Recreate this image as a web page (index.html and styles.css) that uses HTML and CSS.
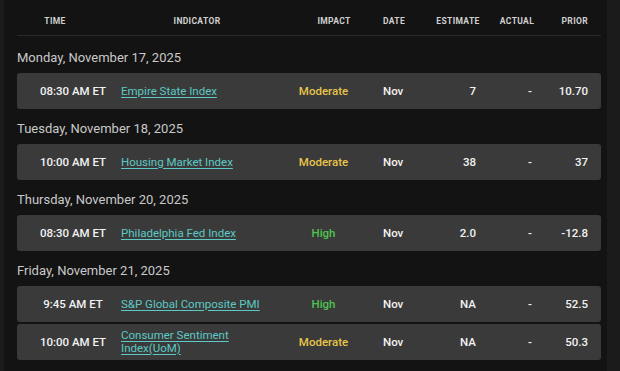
FILE: index.html
```html
<!DOCTYPE html>
<html lang="en">
<head>
<meta charset="utf-8">
<title>Economic Calendar</title>
<link rel="stylesheet" href="styles.css">
</head>
<body>
<div class="panel">
  <div class="thead">
    <div class="th th-time">Time</div>
    <div class="th th-ind">Indicator</div>
    <div class="th th-impact">Impact</div>
    <div class="th th-date">Date</div>
    <div class="th th-est">Estimate</div>
    <div class="th th-act">Actual</div>
    <div class="th th-prior">Prior</div>
  </div>

  <section class="day">
    <h2 class="day-title">Monday, November 17, 2025</h2>
    <div class="row">
      <div class="c-time">08:30 AM ET</div>
      <div class="c-ind"><a href="#">Empire State Index</a></div>
      <div class="c-impact moderate">Moderate</div>
      <div class="c-date">Nov</div>
      <div class="c-est">7</div>
      <div class="c-act">-</div>
      <div class="c-prior">10.70</div>
    </div>
  </section>

  <section class="day">
    <h2 class="day-title">Tuesday, November 18, 2025</h2>
    <div class="row">
      <div class="c-time">10:00 AM ET</div>
      <div class="c-ind"><a href="#">Housing Market Index</a></div>
      <div class="c-impact moderate">Moderate</div>
      <div class="c-date">Nov</div>
      <div class="c-est">38</div>
      <div class="c-act">-</div>
      <div class="c-prior">37</div>
    </div>
  </section>

  <section class="day">
    <h2 class="day-title">Thursday, November 20, 2025</h2>
    <div class="row">
      <div class="c-time">08:30 AM ET</div>
      <div class="c-ind"><a href="#">Philadelphia Fed Index</a></div>
      <div class="c-impact high">High</div>
      <div class="c-date">Nov</div>
      <div class="c-est">2.0</div>
      <div class="c-act">-</div>
      <div class="c-prior">-12.8</div>
    </div>
  </section>

  <section class="day">
    <h2 class="day-title">Friday, November 21, 2025</h2>
    <div class="row">
      <div class="c-time">9:45 AM ET</div>
      <div class="c-ind"><a href="#">S&amp;P Global Composite PMI</a></div>
      <div class="c-impact high">High</div>
      <div class="c-date">Nov</div>
      <div class="c-est">NA</div>
      <div class="c-act">-</div>
      <div class="c-prior">52.5</div>
    </div>
    <div class="row">
      <div class="c-time">10:00 AM ET</div>
      <div class="c-ind"><a href="#">Consumer Sentiment Index(UoM)</a></div>
      <div class="c-impact moderate">Moderate</div>
      <div class="c-date">Nov</div>
      <div class="c-est">NA</div>
      <div class="c-act">-</div>
      <div class="c-prior">50.3</div>
    </div>
  </section>
</div>
</body>
</html>
```
FILE: styles.css
```css
html, body {
  margin: 0;
  padding: 0;
}
body {
  background: #1b1b1b;
  font-family: Roboto, "Liberation Sans", Arial, sans-serif;
  color: #ececec;
  width: 620px;
  height: 371px;
  overflow: hidden;
}
.panel {
  margin: 0 13px 0 4px;
  padding: 0 6px 0 13px;
  background: #131313;
  height: 371px;
  box-sizing: border-box;
}
.thead {
  display: flex;
  align-items: center;
  height: 36px;
  padding-top: 7px;
  box-sizing: border-box;
  border-bottom: 1px solid #2a2a2a;
}
.th {
  font-size: 8.5px;
  font-weight: 700;
  text-transform: uppercase;
  letter-spacing: 0.35px;
  color: #d0d0d0;
  text-align: center;
}
.th-time { width: 76px; }
.th-ind { width: 208px; }
.th-impact { width: 66px; }
.th-date { width: 54px; }
.th-est { width: 74px; }
.th-act { width: 44px; }
.th-prior { flex: 1; text-align: right; padding-right: 13px; }

.day {
  display: flex;
  flex-direction: column;
  gap: 2px;
}
.day-title {
  margin: 12px 0 5px;
  font-size: 13px;
  line-height: 16px;
  font-weight: 400;
  color: #c9c9c9;
}
.day:first-of-type .day-title { margin-top: 14px; }

.row {
  display: flex;
  align-items: center;
  height: 36px;
  padding: 0 13px 0 8px;
  background: #3a3a3a;
  border-radius: 3px;
  font-size: 11.5px;
  font-weight: 500;
  line-height: 13px;
  color: #f2f2f2;
}
.c-time { width: 96px; text-align: center; }
.c-ind { width: 145px; }
.c-ind a {
  color: #5cc9c4;
  font-weight: 400;
  text-decoration: underline;
  text-underline-offset: 2px;
}
.c-impact { width: 115px; text-align: center; }
.moderate { color: #e7c44a; }
.high { color: #4fc24f; }
.c-date { width: 49px; padding-left: 2px; box-sizing: border-box; }
.c-est { width: 46px; text-align: right; }
.c-act { width: 72px; padding-left: 36px; box-sizing: border-box; text-align: center; }
.c-prior { width: 40px; text-align: right; white-space: nowrap; }
```
